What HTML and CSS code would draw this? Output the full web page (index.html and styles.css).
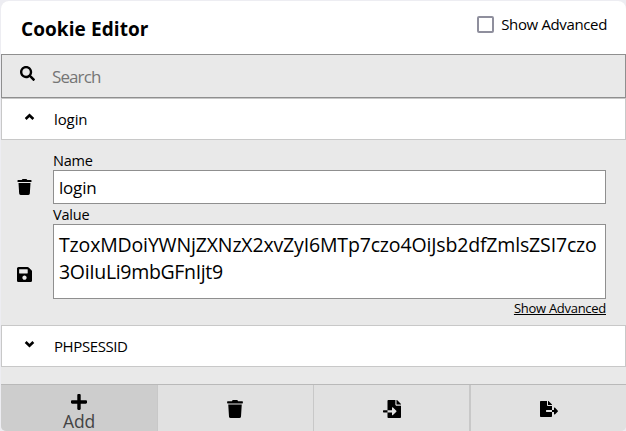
FILE: index.html
```html
<!DOCTYPE html>
<html lang="en">
<head>
<meta charset="utf-8">
<title>Cookie Editor</title>
<link rel="stylesheet" href="styles.css">
</head>
<body>
<main class="popup">
  <header class="header">
    <h1 class="title">Cookie Editor</h1>
    <label class="toggle"><span class="checkbox"></span><span class="toggle-text">Show Advanced</span></label>
  </header>
  <div class="search">
    <svg class="icon search-icon" viewBox="0 0 512 512"><path d="M505 442.700L405.300 343c-4.500-4.500-10.600-7-17-7H372c27.600-35.300 44-79.700 44-128C416 93.100 322.900 0 208 0S0 93.100 0 208s93.100 208 208 208c48.300 0 92.700-16.400 128-44v16.300c0 6.400 2.500 12.500 7 17l99.700 99.700c9.400 9.400 24.600 9.400 33.900 0l28.300-28.300c9.400-9.400 9.400-24.600.1-34zM208 336c-70.700 0-128-57.200-128-128 0-70.700 57.200-128 128-128 70.700 0 128 57.200 128 128 0 70.700-57.200 128-128 128z"/></svg>
    <span class="placeholder">Search</span>
  </div>
  <section class="cookie-row">
    <svg class="chevron" viewBox="0 0 10 7"><path d="M1.500 5.300 5 1.900l3.500 3.400"/></svg>
    <span class="cookie-name">login</span>
  </section>
  <section class="editor">
    <div class="actions">
      <svg class="icon trash" viewBox="0 0 448 512"><path d="M432 32H312l-9.400-18.700A24 24 0 0 0 281.100 0H166.800a23.700 23.700 0 0 0-21.400 13.300L136 32H16A16 16 0 0 0 0 48v32a16 16 0 0 0 16 16h416a16 16 0 0 0 16-16V48a16 16 0 0 0-16-16zM53.200 467a48 48 0 0 0 47.900 45h245.800a48 48 0 0 0 47.900-45L416 128H32z"/></svg>
      <svg class="icon save" viewBox="0 32 448 448"><path d="M433.900 129.900l-83.900-83.900A48 48 0 0 0 316.100 32H48C21.500 32 0 53.500 0 80v352c0 26.500 21.500 48 48 48h352c26.500 0 48-21.500 48-48V163.900a48 48 0 0 0-14.100-34zM224 416c-35.300 0-64-28.700-64-64s28.700-64 64-64 64 28.700 64 64-28.700 64-64 64zm96-304.500V212c0 6.600-5.400 12-12 12H76c-6.600 0-12-5.400-12-12V108c0-6.600 5.400-12 12-12h228.500c3.200 0 6.200 1.300 8.500 3.500l3.500 3.500a12 12 0 0 1 3.500 8.500z"/></svg>
    </div>
    <div class="fields">
      <span class="label name-label">Name</span>
      <div class="input"><span>login</span></div>
      <span class="label value-label">Value</span>
      <div class="textarea"><div class="line-one">TzoxMDoiYWNjZXNzX2xvZyI6MTp7czo4OiJsb2dfZmlsZSI7czo</div><div class="line-two">3OiIuLi9mbGFnIjt9</div></div>
      <a class="advanced">Show Advanced</a>
    </div>
  </section>
  <section class="cookie-row">
    <svg class="chevron" viewBox="0 0 10 7"><path d="M1.500 1.700 5 5.100l3.500-3.400"/></svg>
    <span class="cookie-name session">PHPSESSID</span>
  </section>
  <footer class="toolbar">
    <div class="tool active">
      <svg class="icon plus" viewBox="0 32 448 448"><path d="M416 208H272V64c0-17.700-14.300-32-32-32h-32c-17.700 0-32 14.300-32 32v144H32c-17.700 0-32 14.300-32 32v32c0 17.700 14.300 32 32 32h144v144c0 17.700 14.300 32 32 32h32c17.700 0 32-14.300 32-32V304h144c17.700 0 32-14.300 32-32v-32c0-17.700-14.300-32-32-32z"/></svg>
      <span class="tool-text">Add</span>
    </div>
    <div class="tool">
      <svg class="icon tool-trash" viewBox="0 0 448 512"><path d="M432 32H312l-9.400-18.700A24 24 0 0 0 281.100 0H166.800a23.700 23.700 0 0 0-21.400 13.300L136 32H16A16 16 0 0 0 0 48v32a16 16 0 0 0 16 16h416a16 16 0 0 0 16-16V48a16 16 0 0 0-16-16zM53.200 467a48 48 0 0 0 47.900 45h245.800a48 48 0 0 0 47.900-45L416 128H32z"/></svg>
    </div>
    <div class="tool">
      <svg class="icon import" viewBox="0 0 512 512"><path d="M16 288c-8.800 0-16 7.200-16 16v32c0 8.800 7.200 16 16 16h112v-64zm489-183L407.100 7c-4.500-4.500-10.600-7-17-7H384v128h128v-6.100c0-6.300-2.500-12.400-7-16.900zm-153 31V0H152c-13.300 0-24 10.700-24 24v264h128v-65.200c0-14.300 17.300-21.400 27.400-11.300L379 308c6.600 6.700 6.600 17.400 0 24l-95.700 96.400c-10.100 10.100-27.400 3-27.400-11.300V352H128v136c0 13.300 10.700 24 24 24h336c13.300 0 24-10.700 24-24V160H376c-13.200 0-24-10.800-24-24z"/></svg>
    </div>
    <div class="tool last">
      <svg class="icon export" viewBox="0 0 576 512"><path d="M384 121.900c0-6.300-2.500-12.400-7-16.900L279.100 7c-4.500-4.500-10.600-7-17-7H256v128h128zM571 308l-95.700-96.400c-10.100-10.100-27.400-3-27.400 11.300V288h-64v64h64v65.200c0 14.300 17.300 21.400 27.400 11.300L571 332c6.600-6.600 6.600-17.400 0-24zm-379 28v-32c0-8.800 7.200-16 16-16h176V160H248c-13.200 0-24-10.800-24-24V0H24C10.700 0 0 10.700 0 24v464c0 13.300 10.700 24 24 24h336c13.300 0 24-10.700 24-24V352H208c-8.800 0-16-7.200-16-16z"/></svg>
    </div>
  </footer>
</main>
</body>
</html>
```

FILE: styles.css
```css
* { box-sizing: border-box; }
body { margin: 0; padding: 1px 0 0 1px; height: 431px; overflow: hidden; background: #ededf2; font-family: "Open Sans", "Noto Sans", sans-serif; color: #000; }
svg { display: block; flex: none; }
.icon { fill: #000; }
.popup { display: flex; flex-direction: column; width: 625px; height: 430px; background: #e9e9e9; border-radius: 8px 8px 5px 5px; overflow: hidden; }
.header { display: flex; justify-content: space-between; height: 53px; padding: 0 19px 0 20px; background: #fff; white-space: nowrap; }
.title { margin: 14px 0 0; font-size: 19px; line-height: 28px; font-weight: 700; letter-spacing: 0.08px; }
.toggle { display: flex; align-items: center; height: 24px; margin-top: 11px; gap: 7px; font-size: 15px; letter-spacing: -0.36px; }
.checkbox { width: 17px; height: 17px; border: 2px solid #8f8f9d; border-radius: 2px; background: #fff; }
.search { display: flex; height: 44px; border: 1px solid #8f8f8f; padding-left: 18px; }
.search-icon { width: 15px; height: 15px; margin-top: 11px; }
.placeholder { margin: 10px 0 0 17px; font-size: 17px; line-height: 24px; color: #757575; letter-spacing: -0.9px; }
.cookie-row { display: flex; align-items: center; height: 42px; padding-left: 22px; border: 1px solid #c8c8c8; background: #fff; }
.chevron { width: 11px; height: 8px; margin-top: -4px; fill: none; stroke: #000; stroke-width: 2.400; }
.cookie-name { margin-left: 19px; font-size: 15px; line-height: 22px; letter-spacing: -0.1px; }
.session { letter-spacing: -0.4px; }
.editor { display: flex; height: 185px; padding-right: 20px; }
.actions { width: 52px; padding: 39px 0 0 16px; }
.trash { width: 15px; height: 16px; }
.save { width: 15px; height: 15px; margin-top: 72px; }
.fields { display: flex; flex-direction: column; width: 553px; padding-top: 11px; }
.label { height: 19px; font-size: 14.500px; line-height: 19px; letter-spacing: -0.2px; }
.value-label { height: 20px; line-height: 22px; }
.input { height: 34px; border: 1px solid #8f8f8f; background: #fff; padding-left: 5px; font-size: 17px; line-height: 34px; letter-spacing: -0.2px; }
.textarea { height: 75px; border: 1px solid #8f8f8f; background: #fff; padding: 6px 0 0 5px; font-size: 19.500px; line-height: 27px; white-space: nowrap; }
.line-one { letter-spacing: -0.16px; }
.line-two { letter-spacing: -0.34px; }
.advanced { align-self: flex-end; font-size: 13px; line-height: 18px; letter-spacing: -0.28px; text-decoration: underline; }
.toolbar { display: flex; height: 47px; margin-top: 17px; border-top: 1px solid #b9b9b9; background: #e1e1e1; }
.tool { display: flex; flex-direction: column; align-items: center; width: 156px; padding-right: 1px; border-right: 1px solid #c8c8c8; }
.active { width: 157px; padding-right: 0; background: #cdcdcd; }
.last { flex: 1; padding-right: 0; border-left: 1px solid #c8c8c8; border-right: 0; }
.plus { width: 16px; height: 16px; margin-top: 9px; }
.tool-text { font-size: 17.500px; line-height: 22px; color: #444; letter-spacing: -0.2px; }
.tool-trash { width: 16px; height: 18px; margin-top: 15px; }
.import { width: 18px; height: 18px; margin: 15px 0 0 1px; }
.export { width: 18px; height: 16px; margin-top: 16px; }
```
